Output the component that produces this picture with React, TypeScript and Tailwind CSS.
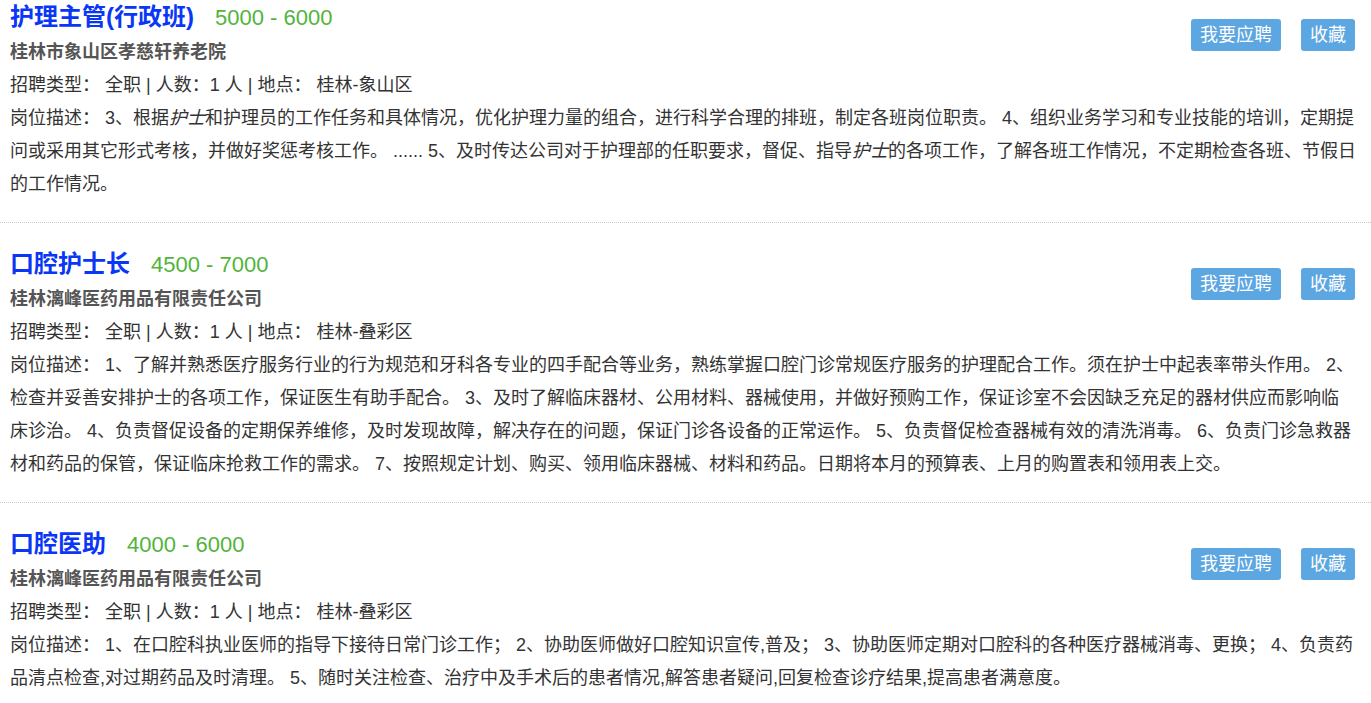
import React from 'react'

interface Job {
  title: string
  salary: string
  company: string
  type: string
  count: string
  place: string
  desc: React.ReactNode
}

const jobs: Job[] = [
  {
    title: '护理主管(行政班)',
    salary: '5000 - 6000',
    company: '桂林市象山区孝慈轩养老院',
    type: '全职',
    count: '1',
    place: '桂林-象山区',
    desc: (
      <>
        3、根据<em>护士</em>和护理员的工作任务和具体情况，优化护理力量的组合，进行科学合理的排班，制定各班岗位职责。 4、组织业务学习和专业技能的培训，定期提问或采用其它形式考核，并做好奖惩考核工作。 ...... 5、及时传达公司对于护理部的任职要求，督促、指导<em>护士</em>的各项工作，了解各班工作情况，不定期检查各班、节假日的工作情况。
      </>
    ),
  },
  {
    title: '口腔护士长',
    salary: '4500 - 7000',
    company: '桂林漓峰医药用品有限责任公司',
    type: '全职',
    count: '1',
    place: '桂林-叠彩区',
    desc: '1、了解并熟悉医疗服务行业的行为规范和牙科各专业的四手配合等业务，熟练掌握口腔门诊常规医疗服务的护理配合工作。须在护士中起表率带头作用。 2、检查并妥善安排护士的各项工作，保证医生有助手配合。 3、及时了解临床器材、公用材料、器械使用，并做好预购工作，保证诊室不会因缺乏充足的器材供应而影响临床诊治。 4、负责督促设备的定期保养维修，及时发现故障，解决存在的问题，保证门诊各设备的正常运作。 5、负责督促检查器械有效的清洗消毒。 6、负责门诊急救器材和药品的保管，保证临床抢救工作的需求。 7、按照规定计划、购买、领用临床器械、材料和药品。日期将本月的预算表、上月的购置表和领用表上交。',
  },
  {
    title: '口腔医助',
    salary: '4000 - 6000',
    company: '桂林漓峰医药用品有限责任公司',
    type: '全职',
    count: '1',
    place: '桂林-叠彩区',
    desc: '1、在口腔科执业医师的指导下接待日常门诊工作； 2、协助医师做好口腔知识宣传,普及； 3、协助医师定期对口腔科的各种医疗器械消毒、更换； 4、负责药品清点检查,对过期药品及时清理。 5、随时关注检查、治疗中及手术后的患者情况,解答患者疑问,回复检查诊疗结果,提高患者满意度。',
  },
]

function JobItem({ job, first }: { job: Job; first: boolean }) {
  return (
    <div
      className={`pl-[10px] pr-[14.5px] pb-[21px] border-b border-dotted border-[#c8c8c8] ${
        first ? 'pt-0' : 'pt-[24px]'
      }`}
    >
      {/* Actions */}
      <div
        className={`float-right mr-[1.5px] flex gap-5 ${first ? 'mt-[19px]' : 'mt-[21px]'}`}
      >
        <button className="h-8 px-[9px] rounded-[3px] bg-[#5ca6e2] text-white text-[18px] leading-8">
          我要应聘
        </button>
        <button className="h-8 px-[9px] rounded-[3px] bg-[#5ca6e2] text-white text-[18px] leading-8">
          收藏
        </button>
      </div>

      {/* Title */}
      <div className="h-[36px] flex items-baseline leading-[33px] whitespace-nowrap">
        <span className="text-[24px] font-bold text-[#0a36f5]">{job.title}</span>
        <span className="ml-[21px] text-[22px] text-[#52b43c]">{job.salary}</span>
      </div>

      <div className="text-[18px] leading-[33px] font-bold text-[#555]">{job.company}</div>

      <div className="text-[18px] leading-[33px] text-[#333]">
        招聘类型： {job.type} | 人数：{job.count} 人 | 地点： {job.place}
      </div>

      <div className="text-[18px] leading-[33px] text-[#333]">
        岗位描述： {job.desc}
      </div>
    </div>
  )
}

export default function App() {
  return (
    <div
      className="min-h-screen bg-white"
      style={{ fontFamily: '"Liberation Sans", "Noto Sans CJK SC", sans-serif' }}
    >
      {jobs.map((job, i) => (
        <JobItem key={job.title} job={job} first={i === 0} />
      ))}
    </div>
  )
}
